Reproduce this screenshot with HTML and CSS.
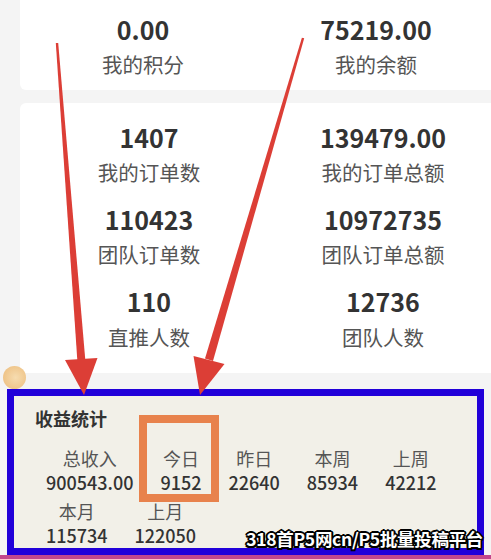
FILE: index.html
```html
<!DOCTYPE html>
<html lang="zh">
<head>
<meta charset="utf-8">
<title>收益统计</title>
<link rel="stylesheet" href="styles.css">
</head>
<body>
<div class="page">
  <section class="card card-top">
    <div class="stat"><div class="num">0.00</div><div class="lbl">我的积分</div></div>
    <div class="stat"><div class="num">75219.00</div><div class="lbl">我的余额</div></div>
  </section>
  <section class="card card-main">
    <div class="stat"><div class="num">1407</div><div class="lbl">我的订单数</div></div>
    <div class="stat"><div class="num">139479.00</div><div class="lbl">我的订单总额</div></div>
    <div class="stat"><div class="num">110423</div><div class="lbl">团队订单数</div></div>
    <div class="stat"><div class="num">10972735</div><div class="lbl">团队订单总额</div></div>
    <div class="stat"><div class="num">110</div><div class="lbl">直推人数</div></div>
    <div class="stat"><div class="num">12736</div><div class="lbl">团队人数</div></div>
  </section>
  <div class="fab"></div>
  <section class="income">
    <h2 class="income-title">收益统计</h2>
    <div class="income-list">
      <div class="inc"><div class="inc-lbl">总收入</div><div class="inc-val">900543.00</div></div>
      <div class="inc inc-mark"><div class="inc-lbl">今日</div><div class="inc-val">9152</div></div>
      <div class="inc"><div class="inc-lbl">昨日</div><div class="inc-val">22640</div></div>
      <div class="inc"><div class="inc-lbl">本周</div><div class="inc-val">85934</div></div>
      <div class="inc"><div class="inc-lbl">上周</div><div class="inc-val">42212</div></div>
      <div class="inc"><div class="inc-lbl">本月</div><div class="inc-val">115734</div></div>
      <div class="inc"><div class="inc-lbl">上月</div><div class="inc-val">122050</div></div>
    </div>
  </section>
  <div class="strip"></div>
  <div class="watermark">318首P5网cn/P5批量投稿平台</div>
  <svg class="arrows" width="491" height="559" viewBox="0 0 491 559" xmlns="http://www.w3.org/2000/svg">
    <polygon fill="#dc3e36" points="55.8,43 58.2,43 85.3,360 77.3,360"/>
    <polygon fill="#dc3e36" points="65,360 97.5,358 84,395"/>
    <polygon fill="#dc3e36" points="301.9,37.7 304.2,38.3 213,361 205,358.5"/>
    <polygon fill="#dc3e36" points="193.5,356 224.5,364 200,395"/>
  </svg>
</div>
</body>
</html>
```

FILE: styles.css
```css
html, body {
  margin: 0;
  padding: 0;
}
body {
  background: #f4f4f4;
  font-family: "Noto Sans CJK SC", "Noto Sans", sans-serif;
  overflow: hidden;
}
.page {
  position: relative;
  width: 491px;
  height: 559px;
  overflow: hidden;
}
.card {
  background: #ffffff;
  margin-left: 20px;
  border-radius: 6px 0 0 6px;
  display: grid;
  overflow: hidden;
}
.card-top {
  grid-template-columns: 233px 233px;
  padding: 13.75px 0 12px 6.5px;
  border-radius: 0 0 0 6px;
}
.card-main {
  margin-top: 13px;
  grid-template-columns: 234px 234px;
  row-gap: 18px;
  padding: 18.75px 0 22px 12px;
}
.stat {
  text-align: center;
}
.num {
  font-size: 25px;
  line-height: 30px;
  font-weight: 700;
  color: #333333;
}
.lbl {
  margin-top: 6.25px;
  font-size: 20.5px;
  line-height: 28px;
  color: #555555;
}
.fab {
  position: absolute;
  left: 3px;
  top: 366px;
  width: 23px;
  height: 23px;
  border-radius: 50%;
  background: radial-gradient(circle at 55% 50%, #f6dcb0 0, #efc58a 70%, #e9b978 100%);
  z-index: 0;
}
.income {
  position: relative;
  z-index: 1;
  margin: 16.5px 0 0 7px;
  width: 477px;
  box-sizing: border-box;
  border: 7px solid #2100d9;
  background: #f2f0e8;
  padding: 9.5px 0 1.5px 0;
}
.income-title {
  margin: 0 0 16px 21px;
  font-size: 18px;
  line-height: 24px;
  font-weight: 700;
  color: #333333;
}
.income-list {
  display: flex;
  flex-wrap: wrap;
  column-gap: 27px;
  row-gap: 5px;
  padding-left: 32px;
}
.inc {
  text-align: center;
}
.inc-lbl {
  font-size: 18px;
  line-height: 24px;
  color: #555555;
}
.inc-val {
  font-size: 18px;
  line-height: 24px;
  font-weight: 500;
  color: #333333;
}
.inc-mark {
  position: relative;
}
.inc-mark::after {
  content: "";
  position: absolute;
  top: -30.5px;
  left: -21px;
  right: -17px;
  bottom: -8.5px;
  border: 8px solid #e8824c;
}
.strip {
  height: 4px;
  background: #c2478c;
}
.watermark {
  position: absolute;
  right: 8px;
  top: 527px;
  z-index: 3;
  font-size: 17.5px;
  line-height: 24px;
  font-weight: 700;
  color: #ffffff;
  letter-spacing: -0.3px;
  text-shadow: 2px 0 0 #000, -2px 0 0 #000, 0 2px 0 #000, 0 -2px 0 #000,
    1.5px 1.5px 0 #000, -1.5px 1.5px 0 #000, 1.5px -1.5px 0 #000, -1.5px -1.5px 0 #000;
}
.arrows {
  position: absolute;
  left: 0;
  top: 0;
  z-index: 2;
  pointer-events: none;
}
```
